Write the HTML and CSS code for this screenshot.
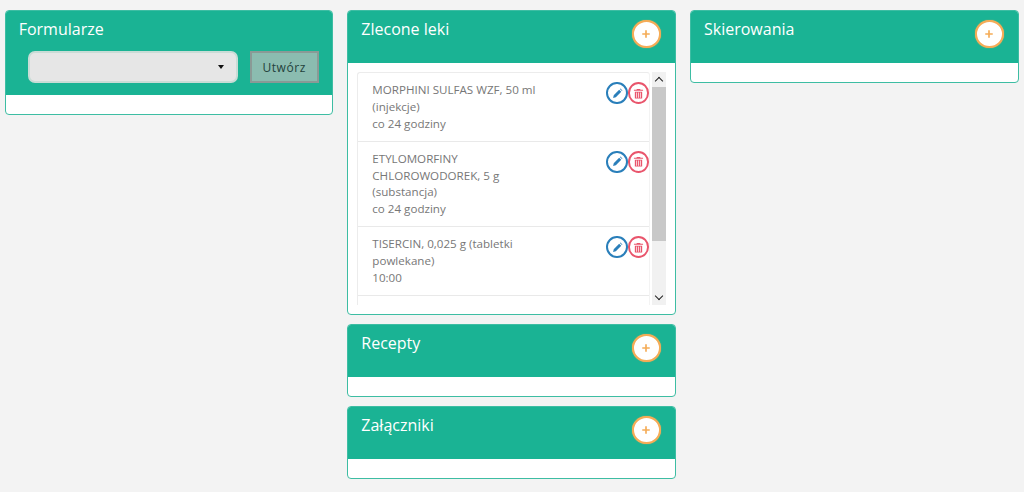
FILE: index.html
```html
<!DOCTYPE html>
<html lang="pl">
<head>
<meta charset="utf-8">
<title>Panele</title>
<link rel="stylesheet" href="styles.css">
</head>
<body>
<svg class="defs" width="0" height="0" aria-hidden="true">
  <symbol id="i-plus" viewBox="0 0 12 12"><path d="M6 1.500v9M1.500 6h9" fill="none" stroke="currentColor" stroke-width="2"/></symbol>
  <symbol id="i-pen" viewBox="0 0 12 12"><path d="M1.200 10.800l.7-3L7.800 1.900l2.300 2.300-5.900 5.900zM8.600 1.100l.6-.5 2.200 2.200-.5.6z" fill="currentColor"/></symbol>
  <symbol id="i-trash" viewBox="0 0 12 12"><path d="M4.200 1h3.600l.4 1H11v1H1V2h2.800zM2 4h8v7.500H2zM3.600 5v5.500h.8V5zm2 0v5.500h.8V5zm2 0v5.500h.8V5z" fill="currentColor" fill-rule="evenodd"/></symbol>
</svg>
<main class="grid">
  <section class="col">
    <div class="panel">
      <div class="head head-form">
        <h2>Formularze</h2>
        <div class="form-row">
          <div class="select"><span class="caret"></span></div>
          <button class="create" type="button">Utwórz</button>
        </div>
      </div>
      <div class="body"></div>
    </div>
  </section>
  <section class="col">
    <div class="panel">
      <div class="head">
        <h2>Zlecone leki</h2>
        <button class="add" type="button"><svg><use href="#i-plus"/></svg></button>
      </div>
      <div class="body body-list">
        <div class="scroll">
          <ul class="list">
            <li class="item">
              <p>MORPHINI SULFAS WZF, 50 ml (injekcje)<br>co 24 godziny</p>
              <div class="actions">
                <button class="round edit" type="button"><svg><use href="#i-pen"/></svg></button>
                <button class="round del" type="button"><svg><use href="#i-trash"/></svg></button>
              </div>
            </li>
            <li class="item">
              <p>ETYLOMORFINY CHLOROWODOREK, 5 g (substancja)<br>co 24 godziny</p>
              <div class="actions">
                <button class="round edit" type="button"><svg><use href="#i-pen"/></svg></button>
                <button class="round del" type="button"><svg><use href="#i-trash"/></svg></button>
              </div>
            </li>
            <li class="item">
              <p>TISERCIN, 0,025 g (tabletki powlekane)<br>10:00</p>
              <div class="actions">
                <button class="round edit" type="button"><svg><use href="#i-pen"/></svg></button>
                <button class="round del" type="button"><svg><use href="#i-trash"/></svg></button>
              </div>
            </li>
          </ul>
          <div class="bar">
            <span class="arrow up"></span>
            <span class="thumb"></span>
            <span class="arrow down"></span>
          </div>
        </div>
      </div>
    </div>
    <div class="panel">
      <div class="head">
        <h2>Recepty</h2>
        <button class="add" type="button"><svg><use href="#i-plus"/></svg></button>
      </div>
      <div class="body"></div>
    </div>
    <div class="panel">
      <div class="head">
        <h2>Załączniki</h2>
        <button class="add" type="button"><svg><use href="#i-plus"/></svg></button>
      </div>
      <div class="body"></div>
    </div>
  </section>
  <section class="col">
    <div class="panel">
      <div class="head">
        <h2>Skierowania</h2>
        <button class="add" type="button"><svg><use href="#i-plus"/></svg></button>
      </div>
      <div class="body"></div>
    </div>
  </section>
</main>
</body>
</html>
```
FILE: styles.css
```css
* { box-sizing: border-box; }
html, body { height: 100%; }
body {
  margin: 0;
  background: #f3f3f3;
  font-family: "Open Sans", sans-serif;
  color: #777;
  overflow: hidden;
}
.defs { display: block; height: 0; }
.grid {
  display: grid;
  grid-template-columns: repeat(3, 328.67px);
  column-gap: 14px;
  padding: 10px 4.67px 0;
  align-items: start;
}
.col { display: flex; flex-direction: column; gap: 9px; }
.panel {
  background: #fff;
  border: 1px solid #3dbda3;
  border-radius: 4px;
  overflow: hidden;
}
.head {
  position: relative;
  height: 53px;
  margin: -1px -1px 0;
  background: #1ab394;
  padding: 8px 14px 0;
  border-radius: 4px 4px 0 0;
}
.head-form { height: 85px; }
.head h2 {
  margin: 0;
  font-size: 16px;
  font-weight: 400;
  line-height: 22px;
  color: #fff;
}
.body { height: 19px; }
.body-list { height: 251px; padding: 9px; }
.form-row {
  display: flex;
  gap: 12px;
  margin: 11px 0 0 9px;
}
.select {
  position: relative;
  width: 210px;
  height: 32px;
  background: #e6e6e6;
  border: 2px solid #c9dcd6;
  border-radius: 7px;
}
.caret {
  position: absolute;
  right: 12px;
  top: 12px;
  border: 3.5px solid transparent;
  border-top: 4px solid #111;
  border-bottom: 0;
}
.create {
  width: 69px;
  height: 32px;
  padding: 0;
  background: #8bbcb0;
  border: 2px solid #8a9a96;
  font-family: "Open Sans", sans-serif;
  font-size: 12px;
  letter-spacing: 0.55px;
  color: #23423c;
}
.add {
  position: absolute;
  top: 10px;
  right: 15px;
  display: flex;
  align-items: center;
  justify-content: center;
  width: 29px;
  height: 28px;
  padding: 0;
  background: #fff;
  border: 2px solid #f5ac57;
  border-radius: 50%;
  box-shadow: 0 0 1px #f5ac57;
  color: #f5ac57;
}
.add svg { width: 10px; height: 10px; }
.scroll { display: flex; height: 233px; gap: 2px; }
.list {
  flex: 1;
  margin: 0;
  padding: 0;
  list-style: none;
  border: 1px solid #ececec;
  border-bottom: 0;
  border-right-color: #f3f3f3;
  border-radius: 3px 3px 0 0;
  overflow: hidden;
}
.item {
  display: flex;
  justify-content: space-between;
  padding: 9.1px 0 8.5px 14px;
  border-bottom: 1px solid #e9e9e9;
}
.item p {
  width: 176px;
  margin: 0;
  font-size: 11.6px;
  line-height: 16.7px;
  color: #777;
}
.actions { display: flex; margin: 0 -0.5px 0 0; }
.round {
  display: flex;
  align-items: center;
  justify-content: center;
  width: 21.5px;
  height: 22px;
  padding: 0;
  background: #fff;
  border: 2px solid;
  border-radius: 50%;
}
.round svg { width: 11px; height: 11px; }
.edit { color: #2a7fba; }
.del { color: #e9556c; }
.bar {
  display: flex;
  flex-direction: column;
  width: 14px;
  background: #f1f1f1;
}
.thumb { height: 154px; background: #c8c8c8; }
.arrow { position: relative; height: 15px; }
.down { margin-top: auto; }
.arrow::before {
  content: "";
  position: absolute;
  left: 4.5px;
  width: 5px;
  height: 5px;
  border: solid #222;
  border-width: 1.5px 0 0 1.5px;
}
.up::before { top: 6px; transform: rotate(45deg); }
.down::before { top: 3px; transform: rotate(225deg); }
```
